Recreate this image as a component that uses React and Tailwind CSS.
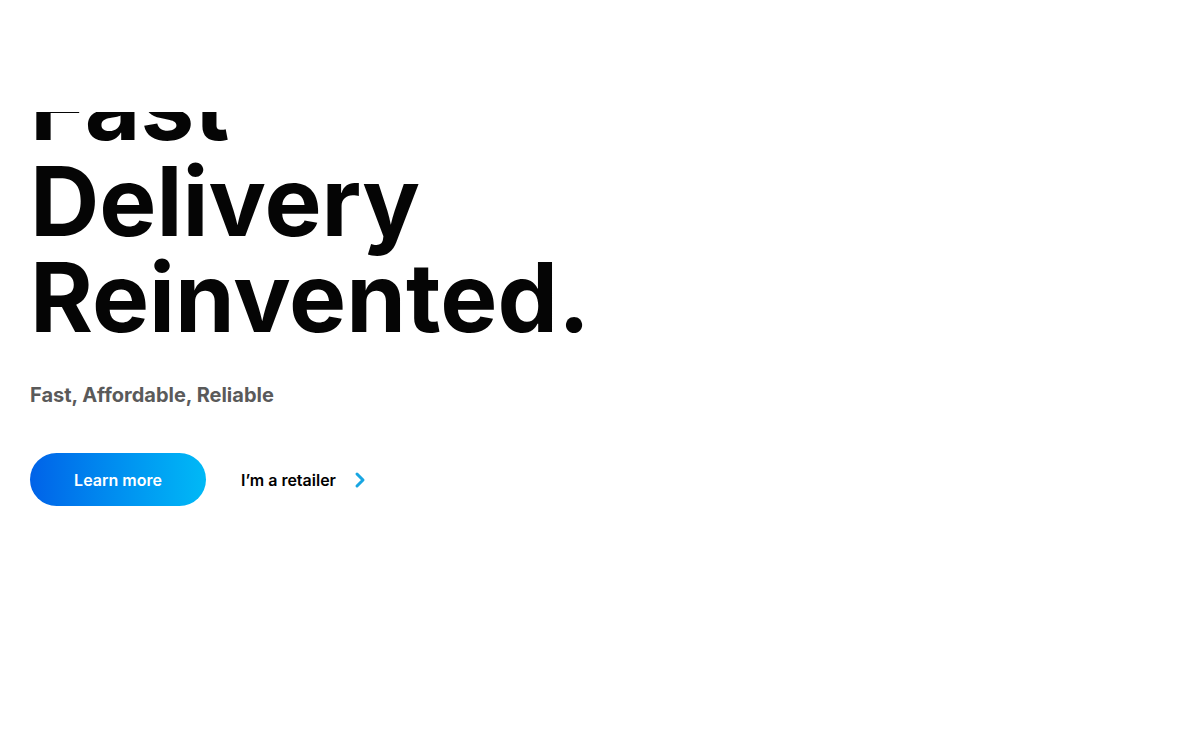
import React from 'react';

const App = () => {
    return (
        <div className="min-h-[750px] bg-white font-['Inter',sans-serif]">
            <header className="fixed top-0 left-0 right-0 h-[112px] bg-white z-10" />
            <section className="px-[30px] pt-[57px]">
                <h1 className="text-[96px] leading-[96px] font-bold text-[#050505]">
                    Fast<br />Delivery<br />Reinvented.
                </h1>
                <p className="mt-[35px] text-[20px] font-bold text-[#5a5a5a]">
                    Fast, Affordable, Reliable
                </p>
                <div className="mt-[43px] flex items-center gap-[35px]">
                    <button className="h-[53px] w-[176px] rounded-full bg-gradient-to-r from-[#0062e8] to-[#00b9f6] text-[16px] font-semibold text-white">
                        Learn more
                    </button>
                    <a href="#" className="flex items-center gap-[16px] text-[16px] font-semibold text-black">
                        I’m a retailer
                        <svg width="16" height="18" viewBox="0 0 16 18" fill="none" stroke="#18a6e2" strokeWidth="3" strokeLinecap="round" strokeLinejoin="round">
                            <path d="M5 3l6 6-6 6" />
                        </svg>
                    </a>
                </div>
            </section>
        </div>
    );
};

export default App;
